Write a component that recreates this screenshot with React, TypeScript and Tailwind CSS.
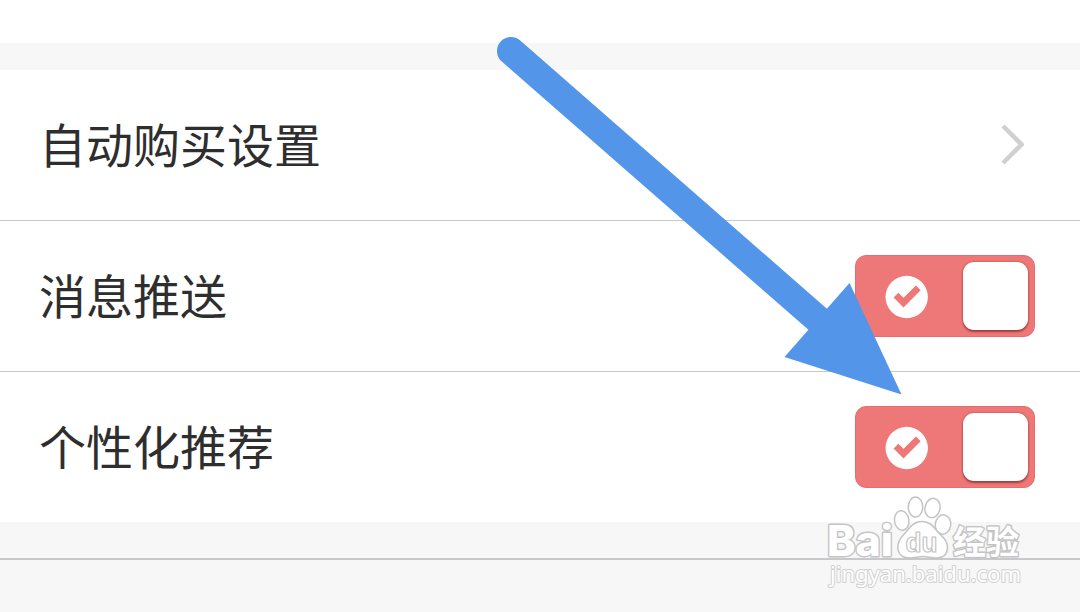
import type { ReactNode } from "react";

interface SettingRowProps {
  label: string;
  divider?: boolean;
  children: ReactNode;
}

function SettingRow({ label, divider, children }: SettingRowProps) {
  return (
    <li
      className={`flex items-center justify-between bg-white pl-[39px] pr-[45px] ${
        divider ? "h-[151px] border-b border-[#c8c8c8]" : "h-[150px]"
      }`}
    >
      <span className="pb-[5px] text-[47px] leading-[60px] text-[#2e2e2e]">{label}</span>
      {children}
    </li>
  );
}

function Chevron() {
  return (
    <svg className="mr-[11px] h-11 w-6" viewBox="0 0 24 44" fill="none">
      <path d="M3 3L21.5 21.5L3 40" stroke="#d0d0d0" strokeWidth="4.5" />
    </svg>
  );
}

function Toggle() {
  return (
    <button
      type="button"
      role="switch"
      aria-checked="true"
      className="flex h-[82px] w-[180px] items-center justify-between rounded-[11px] border border-[#ea6c6c] bg-[#ee7777] pl-[29px] pr-1.5"
    >
      <svg className="mt-0.5 h-11 w-11" viewBox="0 0 44 44">
        <circle cx="21.7" cy="22" r="21.2" fill="#fff" />
        <path d="M11 20.2L18.5 27.7L33.3 12.9" fill="none" stroke="#ee7777" strokeWidth="6.8" />
      </svg>
      <span className="mb-px h-[68px] w-[65px] rounded-[11px] bg-white shadow-[0_2px_2px_rgba(90,20,20,0.5),0_0_2px_rgba(90,20,20,0.5)]" />
    </button>
  );
}

function Arrow() {
  return (
    <svg className="pointer-events-none absolute inset-0" width="1080" height="612" viewBox="0 0 1080 612">
      <path d="M511 51L830 330" stroke="#5295e9" strokeWidth="28" strokeLinecap="round" />
      <path d="M849.5 283L901.5 394.5L784.5 357Z" fill="#5295e9" />
    </svg>
  );
}

function Watermark() {
  return (
    <svg
      className="pointer-events-none absolute left-[820px] top-[490px]"
      width="210"
      height="110"
      viewBox="0 0 210 110"
      fill="#fff"
      stroke="#c4c4c4"
      strokeWidth="1.5"
      strokeLinejoin="round"
    >
      <ellipse cx="95.5" cy="17" rx="7.2" ry="10" />
      <ellipse cx="112.5" cy="18" rx="7.5" ry="9.8" transform="rotate(12 112.5 18)" />
      <ellipse cx="81.7" cy="30.5" rx="7.2" ry="9.8" transform="rotate(-8 81.7 30.5)" />
      <ellipse cx="123" cy="34.5" rx="7.7" ry="9.7" transform="rotate(8 123 34.5)" />
      <path d="M102 31.5C94 31.5 90 37 86.5 41.5C83 46 77.8 49 77.8 57C77.8 64.5 83 68 90 68C95 68 98 66.5 103 66.5C108 66.5 111 68 116 68C123 68 127.5 64.5 127.5 57C127.5 49.5 121.5 46.5 117.5 41.5C113.5 36.5 110 31.5 102 31.5Z" />
      <g style={{ paintOrder: "stroke" }} strokeWidth="2.8">
        <text x="7" y="65.5" textLength="66" lengthAdjust="spacingAndGlyphs" className="font-[Inter,sans-serif] text-[42px] font-extrabold">
          Bai
        </text>
        <text x="133" y="64" textLength="66" className="font-['Noto_Sans_CJK_SC',sans-serif] text-[33px] font-bold">
          经验
        </text>
        <text x="10" y="92" textLength="191" lengthAdjust="spacingAndGlyphs" strokeWidth="2" stroke="#d0d0d0" className="font-['Noto_Sans',sans-serif] text-[22px]">
          jingyan.baidu.com
        </text>
      </g>
      <text x="85.5" y="61.5" textLength="32" lengthAdjust="spacingAndGlyphs" strokeWidth="1.2" className="font-['Liberation_Sans',sans-serif] text-[27px] font-bold">
        du
      </text>
    </svg>
  );
}

export default function App() {
  return (
    <main className="relative h-[612px] w-[1080px] overflow-hidden bg-[#f7f7f7] font-['Noto_Sans_CJK_SC',sans-serif]">
      <div className="h-[43px] bg-white" />
      <ul className="mt-[27px]">
        <SettingRow label="自动购买设置" divider>
          <Chevron />
        </SettingRow>
        <SettingRow label="消息推送" divider>
          <Toggle />
        </SettingRow>
        <SettingRow label="个性化推荐">
          <Toggle />
        </SettingRow>
      </ul>
      <div className="mt-9 h-0.5 bg-[#c8c8cc]" />
      <Arrow />
      <Watermark />
    </main>
  );
}
